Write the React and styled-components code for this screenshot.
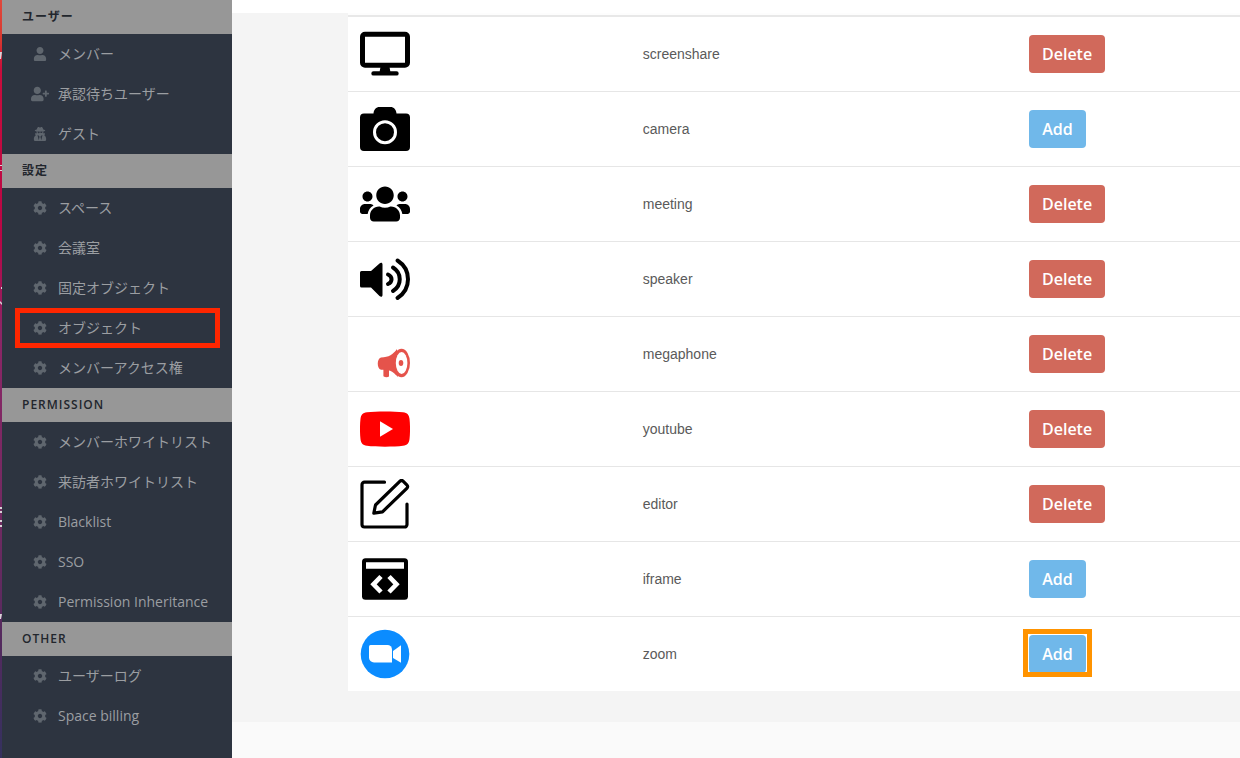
import React from "react";
import styled, { createGlobalStyle } from "styled-components";
import { FaCog, FaUser, FaUserPlus, FaUserSecret, FaUsers } from "react-icons/fa";

const GlobalStyle = createGlobalStyle`
  * { box-sizing: border-box; }
  body {
    margin: 0;
    background: #fafafa;
    font-family: "Open Sans", "Noto Sans CJK JP", sans-serif;
    overflow-x: hidden;
  }
`;

const Page = styled.div`
  display: flex;
  min-height: 100vh;
`;

const EdgeStrip = styled.div`
  width: 2px;
  flex: none;
  background: linear-gradient(#e0483c 0, #d8382f 40px, #c90d3c 70px, #b80646 240px, #8c2566 330px, #752a62 500px, #542a5e 640px, #34315e 100%);
`;

const Sidebar = styled.nav`
  width: 230px;
  flex: none;
  background: #2d3440;
`;

const SectionTitle = styled.h2`
  display: flex;
  align-items: center;
  height: 34px;
  margin: 0;
  padding: 0 20px;
  background: #979797;
  color: #22262d;
  font-size: 12px;
  line-height: 18px;
  font-weight: 600;
  letter-spacing: 1px;
`;

const NavList = styled.ul`
  margin: 0;
  padding: 0;
  list-style: none;
`;

const NavItem = styled.li`
  position: relative;
`;

const NavLink = styled.a`
  display: flex;
  align-items: center;
  gap: 8px;
  height: 40px;
  padding: 0 10px 0 28px;
  color: #9b9ea2;
  font-size: 14px;
  line-height: 20px;
  font-weight: 400;
  text-decoration: none;
  white-space: nowrap;
`;

const NavIcon = styled.span`
  display: flex;
  justify-content: center;
  width: 20px;
  flex: none;
  color: #5f666e;
`;

const Highlight = styled.span`
  position: absolute;
  inset: ${(p) => p.$inset};
  border: 5px solid ${(p) => p.$color};
  pointer-events: none;
`;

const Content = styled.main`
  flex: 1;
  min-width: 0;
`;

const TopBar = styled.div`
  height: 13px;
  background: #fff;
`;

const Body = styled.div`
  padding: 0 0 31px 116px;
  background: #f4f4f4;
`;

const Panel = styled.div`
  padding-top: 2px;
  background: #fdfdfd;
`;

const ObjectTable = styled.table`
  width: 100%;
  table-layout: fixed;
  border-collapse: separate;
  border-spacing: 0;
  border-top: 2px solid #e8e8e8;
  background: #fff;
`;

const Col = styled.col`
  width: ${(p) => p.$width};
`;

const Row = styled.tr`
  & + & > td { border-top: 1px solid #e6e6e6; }
  &:first-child > td { height: 74px; }
`;

const Cell = styled.td`
  height: 75px;
  padding: 0 12px;
  vertical-align: middle;
  color: #5a5a5a;
  font-family: "Liberation Sans", sans-serif;
  font-size: 14px;
  line-height: 20px;
`;

const Picture = styled.span`
  display: flex;
  width: 50px;
  height: 50px;
`;

const ButtonHolder = styled.div`
  position: relative;
  width: fit-content;
`;

const ActionButton = styled.button`
  display: block;
  min-width: 57px;
  height: 38px;
  padding: 0 13px;
  border: 0;
  border-radius: 4px;
  background: ${(p) => (p.$kind === "Delete" ? "#d1695b" : "#70b8ea")};
  color: #fff;
  font-family: "Open Sans", sans-serif;
  font-size: 16px;
  line-height: 24px;
  font-weight: 600;
  cursor: pointer;
`;

const Drawing = ({ children }) => (
  <svg width="50" height="50" viewBox="0 0 50 50" aria-hidden="true">{children}</svg>
);

const pictures = {
  screenshare: (
    <Drawing>
      <rect x="2.5" y="5.200" width="45" height="31" rx="2.5" fill="none" stroke="#000" strokeWidth="5" />
      <path d="M20.500 38h9l.8 4.200h6.200a2.200 2.200 0 0 1 0 4.400h-23a2.200 2.200 0 0 1 0-4.400h6.200z" />
    </Drawing>
  ),
  camera: (
    <Drawing>
      <path d="M4 9.500h9.500c.4-4 2.600-6.500 6-6.500h11c3.400 0 5.600 2.500 6 6.500H46a4 4 0 0 1 4 4v29.500a4 4 0 0 1-4 4H4a4 4 0 0 1-4-4V13.500a4 4 0 0 1 4-4z" />
      <circle cx="25" cy="28.200" r="10.500" fill="none" stroke="#fff" strokeWidth="3" />
    </Drawing>
  ),
  meeting: <FaUsers size={50} color="#000" aria-hidden="true" />,
  speaker: (
    <Drawing>
      <path d="M1.500 17H11l8.500-7.500c1.500-1.300 3-.8 3 1v30.500c0 2-1.500 2.300-3 1L11 33.500H1.500A1.500 1.500 0 0 1 0 32V18.500A1.500 1.500 0 0 1 1.500 17z" />
      <g fill="none" stroke="#000" strokeWidth="4" strokeLinecap="round">
        <path d="M28 20.500c4.700 2 4.700 7.500 0 9.500" />
        <path d="M33 13.500c9 5.500 9 18 0 23.500" />
        <path d="M37.500 6.500c14 9 14 28.500 0 37.500" />
      </g>
    </Drawing>
  ),
  megaphone: (
    <Drawing>
      <g fill="#e5534b">
        <path d="M21 28.500c8-.3 12-3 16-8.500l1 28c-4-4-6-5.800-9-6.500v6c-1.500 1.200-4 .9-5.600-.2V40.800l-2.400-.1c-4.300-1-4.300-11.300 0-12.200z" />
        <ellipse cx="41.500" cy="34" rx="8.500" ry="14.300" />
      </g>
      <ellipse cx="41.600" cy="34" rx="5.800" ry="11" fill="#fff" />
      <ellipse cx="41" cy="34" rx="2.300" ry="3" fill="#e5534b" />
    </Drawing>
  ),
  youtube: (
    <Drawing>
      <path d="M7 8.300c9-1.200 27-1.200 36 0 4.500.6 6 2.700 6.500 6.500.7 6 .7 14.500 0 20.500-.5 3.800-2 5.900-6.500 6.500-9 1.200-27 1.200-36 0-4.500-.6-6-2.700-6.500-6.500-.7-6-.7-14.500 0-20.500.5-3.800 2-5.900 6.500-6.500z" fill="#f00" />
      <path d="M20 17.300v15.500l13-7.700z" fill="#fff" />
    </Drawing>
  ),
  editor: (
    <Drawing>
      <g fill="none" stroke="#000" strokeWidth="3.200" strokeLinecap="round" strokeLinejoin="round">
        <path d="M24.500 3.200H4.500A2.500 2.500 0 0 0 2 5.700v39.800a2.500 2.500 0 0 0 2.500 2.500h40a2.500 2.500 0 0 0 2.500-2.500V25" />
        <path d="M13.800 34.200l1.700-8.200L39.800 2.300c1.300-1.200 2.500-1 3.500 0l3.500 3.500c1.200 1.200 1.200 2.300 0 3.500L22.500 32.800z" />
      </g>
    </Drawing>
  ),
  iframe: (
    <Drawing>
      <rect x="2" y="4.300" width="46" height="41.500" rx="3.500" />
      <path d="M6 8.300h38v6.400H6z" fill="#fff" />
      <path d="M21 22.500l-7.500 7.800 7.500 7.700M29 22.500l7.500 7.800-7.500 7.700" fill="none" stroke="#fff" strokeWidth="4.600" />
    </Drawing>
  ),
  zoom: (
    <Drawing>
      <circle cx="25" cy="25" r="24.300" fill="#0b8cff" />
      <path d="M10.500 16H27.500a4.500 4.500 0 0 1 4.500 4.500V33.500H14a5 5 0 0 1-5-5V17.500a1.500 1.500 0 0 1 1.500-1.500z" fill="#fff" />
      <path d="M33 22l8-5.800v17.600L33 29z" fill="#fff" />
    </Drawing>
  ),
};

const sections = [
  {
    title: "ユーザー",
    items: [
      { label: "メンバー", Icon: FaUser },
      { label: "承認待ちユーザー", Icon: FaUserPlus, iconSize: 18 },
      { label: "ゲスト", Icon: FaUserSecret },
    ],
  },
  {
    title: "設定",
    items: [
      { label: "スペース" },
      { label: "会議室" },
      { label: "固定オブジェクト" },
      { label: "オブジェクト", marked: true },
      { label: "メンバーアクセス権" },
    ],
  },
  {
    title: "PERMISSION",
    items: [
      { label: "メンバーホワイトリスト" },
      { label: "来訪者ホワイトリスト" },
      { label: "Blacklist" },
      { label: "SSO" },
      { label: "Permission Inheritance" },
    ],
  },
  { title: "OTHER", items: [{ label: "ユーザーログ" }, { label: "Space billing" }] },
];

const objects = [
  { name: "screenshare", action: "Delete" },
  { name: "camera", action: "Add" },
  { name: "meeting", action: "Delete" },
  { name: "speaker", action: "Delete" },
  { name: "megaphone", action: "Delete" },
  { name: "youtube", action: "Delete" },
  { name: "editor", action: "Delete" },
  { name: "iframe", action: "Add" },
  { name: "zoom", action: "Add", marked: true },
];

export default function App() {
  return (
    <Page>
      <GlobalStyle />
      <EdgeStrip>
        <svg width="2" height="758" viewBox="0 0 2 758" aria-hidden="true" display="block">
          <path d="M0 52h2l-1 7H0zM0 165h2v1H0zM0 170h2v1H0zM1 287h1v2H1zM0 301l2 2v2l-2-2zM0 507h2v2H0zM0 511h2v2H0zM0 520h2v2H0zM0 525h2v2H0zM0 614h2l-1 5H0z" fill="#d9d3d8" />
        </svg>
      </EdgeStrip>
      <Sidebar>
        {sections.map((section) => (
          <section key={section.title}>
            <SectionTitle>{section.title}</SectionTitle>
            <NavList>
              {section.items.map(({ label, Icon = FaCog, iconSize = 14, marked }) => (
                <NavItem key={label}>
                  <NavLink href="#">
                    <NavIcon><Icon size={iconSize} aria-hidden="true" /></NavIcon>
                    {label}
                  </NavLink>
                  {marked && <Highlight $color="#ff2600" $inset="0 12px 0 13px" />}
                </NavItem>
              ))}
            </NavList>
          </section>
        ))}
      </Sidebar>
      <Content>
        <TopBar />
        <Body>
          <Panel>
            <ObjectTable>
              <colgroup>
                <Col $width="31.7%" />
                <Col $width="43.3%" />
                <Col $width="25%" />
              </colgroup>
              <tbody>
                {objects.map(({ name, action, marked }) => (
                  <Row key={name}>
                    <Cell><Picture>{pictures[name]}</Picture></Cell>
                    <Cell>{name}</Cell>
                    <Cell>
                      <ButtonHolder>
                        <ActionButton type="button" $kind={action}>{action}</ActionButton>
                        {marked && <Highlight $color="#ff9300" $inset="-6px -6px -4px" />}
                      </ButtonHolder>
                    </Cell>
                  </Row>
                ))}
              </tbody>
            </ObjectTable>
          </Panel>
        </Body>
      </Content>
    </Page>
  );
}
